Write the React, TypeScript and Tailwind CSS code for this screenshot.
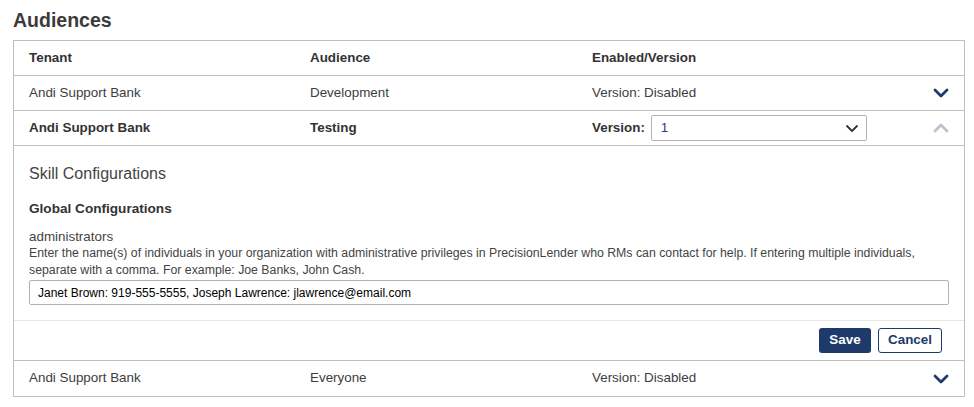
import type { ReactNode } from 'react';

const navy = '#1d3a6b';

function ChevronDown({ className = '' }: { className?: string }) {
  return (
    <svg width="16" height="10" viewBox="0 0 16 10" className={className} aria-hidden>
      <polyline points="2,2 8,8 14,2" fill="none" stroke="currentColor" strokeWidth="2.8" strokeLinecap="round" strokeLinejoin="round" />
    </svg>
  );
}

function ChevronUp({ className = '' }: { className?: string }) {
  return (
    <svg width="16" height="10" viewBox="0 0 16 10" className={className} aria-hidden>
      <polyline points="2,8 8,2 14,8" fill="none" stroke="currentColor" strokeWidth="2.8" strokeLinecap="round" strokeLinejoin="round" />
    </svg>
  );
}

function Row({ children, bold = false, border = true }: { children: ReactNode; bold?: boolean; border?: boolean }) {
  return (
    <div
      className={`grid h-[35px] grid-cols-[281px_282px_1fr_16px] items-center px-[15px] text-[13.4px] ${
        bold ? 'font-bold text-[#333]' : 'text-[#3d3d3d]'
      } ${border ? 'border-b border-[#bfbfbf]' : ''}`}
    >
      {children}
    </div>
  );
}

export default function App() {
  return (
    <div className="min-h-[407px] bg-white pl-[13px] pt-[9px] font-['Liberation_Sans',Arial,sans-serif]">
      <h1 className="mb-[9px] text-[19.5px] leading-[22px] font-bold text-[#3b3b3b]">Audiences</h1>

      <div className="w-[952px] border border-[#bfbfbf]">
        <Row bold>
          <span>Tenant</span>
          <span>Audience</span>
          <span>Enabled/Version</span>
          <span />
        </Row>

        <Row>
          <span>Andi Support Bank</span>
          <span>Development</span>
          <span>Version: Disabled</span>
          <ChevronDown className="text-[#1d3a6b]" />
        </Row>

        <Row bold>
          <span>Andi Support Bank</span>
          <span>Testing</span>
          <div className="flex items-center gap-[6px]">
            <span>Version:</span>
            <div className="flex h-[26px] w-[216px] items-center justify-between rounded-[2px] border border-[#b3b3b3] bg-white pl-[9px] pr-[7px]">
              <span className="font-normal text-[#1f3f78]">1</span>
              <svg width="14" height="9" viewBox="0 0 14 9" aria-hidden>
                <polyline points="2,2 7,7 12,2" fill="none" stroke="#333" strokeWidth="1.8" strokeLinecap="round" strokeLinejoin="round" />
              </svg>
            </div>
          </div>
          <ChevronUp className="text-[#b9c3d1]" />
        </Row>

        <div className="border-b border-[#bfbfbf]">
          <div className="px-[15px] pt-[19px] pb-[15px]">
            <h2 className="text-[16px] leading-[18px] text-[#444]">Skill Configurations</h2>
            <h3 className="mt-[18px] text-[13.6px] leading-[16px] font-bold text-[#333]">Global Configurations</h3>
            <div className="mt-[12px] text-[13.4px] leading-[16px] text-[#444]">administrators</div>
            <p className="pr-[20px] text-[12.3px] leading-[17px] text-[#444]">
              Enter the name(s) of individuals in your organization with administrative privileges in PrecisionLender who RMs can contact for help. If entering multiple individuals, separate with a comma. For example: Joe Banks, John Cash.
            </p>
            <input
              readOnly
              value="Janet Brown: 919-555-5555, Joseph Lawrence: jlawrence@email.com"
              className="mt-px block h-[25px] w-full rounded-[2px] border border-[#b3b3b3] px-[8px] text-[12px] text-black outline-none"
            />
          </div>
          <div className="flex h-[40px] items-center justify-end gap-[7px] border-t border-[#e6e6e6] pr-[22px]">
            <button
              className="h-[25px] w-[52px] rounded-[3px] text-[13.4px] font-bold text-white"
              style={{ backgroundColor: navy }}
            >
              Save
            </button>
            <button className="h-[25px] w-[64px] rounded-[3px] border border-[#1d3a6b] bg-white text-[13.4px] font-bold text-[#1d3a6b]">
              Cancel
            </button>
          </div>
        </div>

        <Row border={false}>
          <span>Andi Support Bank</span>
          <span>Everyone</span>
          <span>Version: Disabled</span>
          <ChevronDown className="text-[#1d3a6b]" />
        </Row>
      </div>
    </div>
  );
}
